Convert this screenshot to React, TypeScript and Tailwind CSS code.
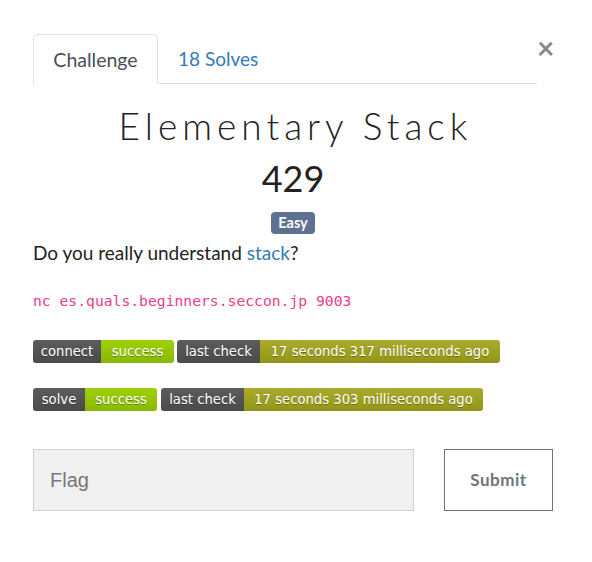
import React from 'react'

const lato = { fontFamily: 'Lato, "Noto Sans", sans-serif' }

interface Seg {
  text: string
  width: number
  color: 'dark' | 'green' | 'olive'
}

const segColor = {
  dark: 'bg-gradient-to-b from-[#5c5c5c] to-[#4a4a4a]',
  green: 'bg-gradient-to-b from-[#9fd10a] to-[#88b800]',
  olive: 'bg-gradient-to-b from-[#a9ab2c] to-[#939516]',
}

function Badge({ segs }: { segs: Seg[] }) {
  return (
    <div className="flex h-[23px] overflow-hidden rounded-[3px]">
      {segs.map((s, i) => (
        <div
          key={i}
          style={{ width: s.width, fontFamily: '"DejaVu Sans", Verdana, sans-serif', textShadow: '0 1px 0 rgba(1,1,1,0.3)' }}
          className={`flex items-center justify-center text-[13.2px] text-white ${segColor[s.color]}`}
        >
          {s.text}
        </div>
      ))}
    </div>
  )
}

export default function App() {
  return (
    <div className="h-[562px] w-[592px] bg-white pl-[33px] pr-[39px] pt-[34px]" style={lato}>
      {/* Tabs */}
      <div className="flex items-start">
        <div className="flex h-[50px] flex-1 border-b border-[#dee2e6]">
          <div className="mb-[-1px] flex w-[125px] items-center justify-center rounded-t-[5px] border border-b-white border-[#dee2e6] bg-white pt-[1px] text-[19.5px] text-[#495057]">
            Challenge
          </div>
          <div className="flex items-center pl-[20px] pt-[1px] text-[19px] text-[#337ab7]">18 Solves</div>
        </div>
        <div className="mt-[-1px] w-[16px] text-right text-[30px] leading-[28px] font-bold text-[#888]">×</div>
      </div>

      {/* Title */}
      <div className="text-center">
        <h1 className="mt-[19px] pl-[5px] text-[37px] leading-[46px] font-light tracking-[5px] text-[#222]">Elementary Stack</h1>
        <div className="mt-[7px] text-[36px] leading-[44px] text-[#222]">429</div>
        <div className="mt-[12px] flex justify-center">
          <span className="rounded-[4px] bg-[#5d7293] px-[7px] text-[14.5px] leading-[22px] font-bold text-white">Easy</span>
        </div>
      </div>

      <p className="mt-[6px] text-[19px] leading-[26px] text-[#222]">
        Do you really understand <span className="text-[#337ab7]">stack</span>?
      </p>

      <div
        className="mt-[24px] text-[14.7px] leading-[22px] text-[#e83e8c]"
        style={{ fontFamily: '"DejaVu Sans Mono", "Liberation Mono", monospace' }}
      >
        nc es.quals.beginners.seccon.jp 9003
      </div>

      <div className="mt-[28px] flex gap-[3px]">
        <Badge segs={[{ text: 'connect', width: 68, color: 'dark' }, { text: 'success', width: 73, color: 'green' }]} />
        <Badge segs={[{ text: 'last check', width: 83, color: 'dark' }, { text: '17 seconds 317 milliseconds ago', width: 240, color: 'olive' }]} />
      </div>
      <div className="mt-[25px] flex gap-[4px]">
        <Badge segs={[{ text: 'solve', width: 52, color: 'dark' }, { text: 'success', width: 72, color: 'green' }]} />
        <Badge segs={[{ text: 'last check', width: 83, color: 'dark' }, { text: '17 seconds 303 milliseconds ago', width: 239, color: 'olive' }]} />
      </div>

      <div className="mt-[38px] flex gap-[30px]">
        <div className="flex h-[62px] w-[381px] items-center border border-[#ccd3dc] bg-[#f0f0f0] pl-[16px] text-[20px] text-[#777]" style={{ fontFamily: '"Liberation Sans", Arial, sans-serif' }}>
          Flag
        </div>
        <button className="h-[62px] w-[109px] border border-[#6c757d] bg-white text-[17px] font-bold tracking-[0.5px] text-[#6c757d]">
          Submit
        </button>
      </div>
    </div>
  )
}
